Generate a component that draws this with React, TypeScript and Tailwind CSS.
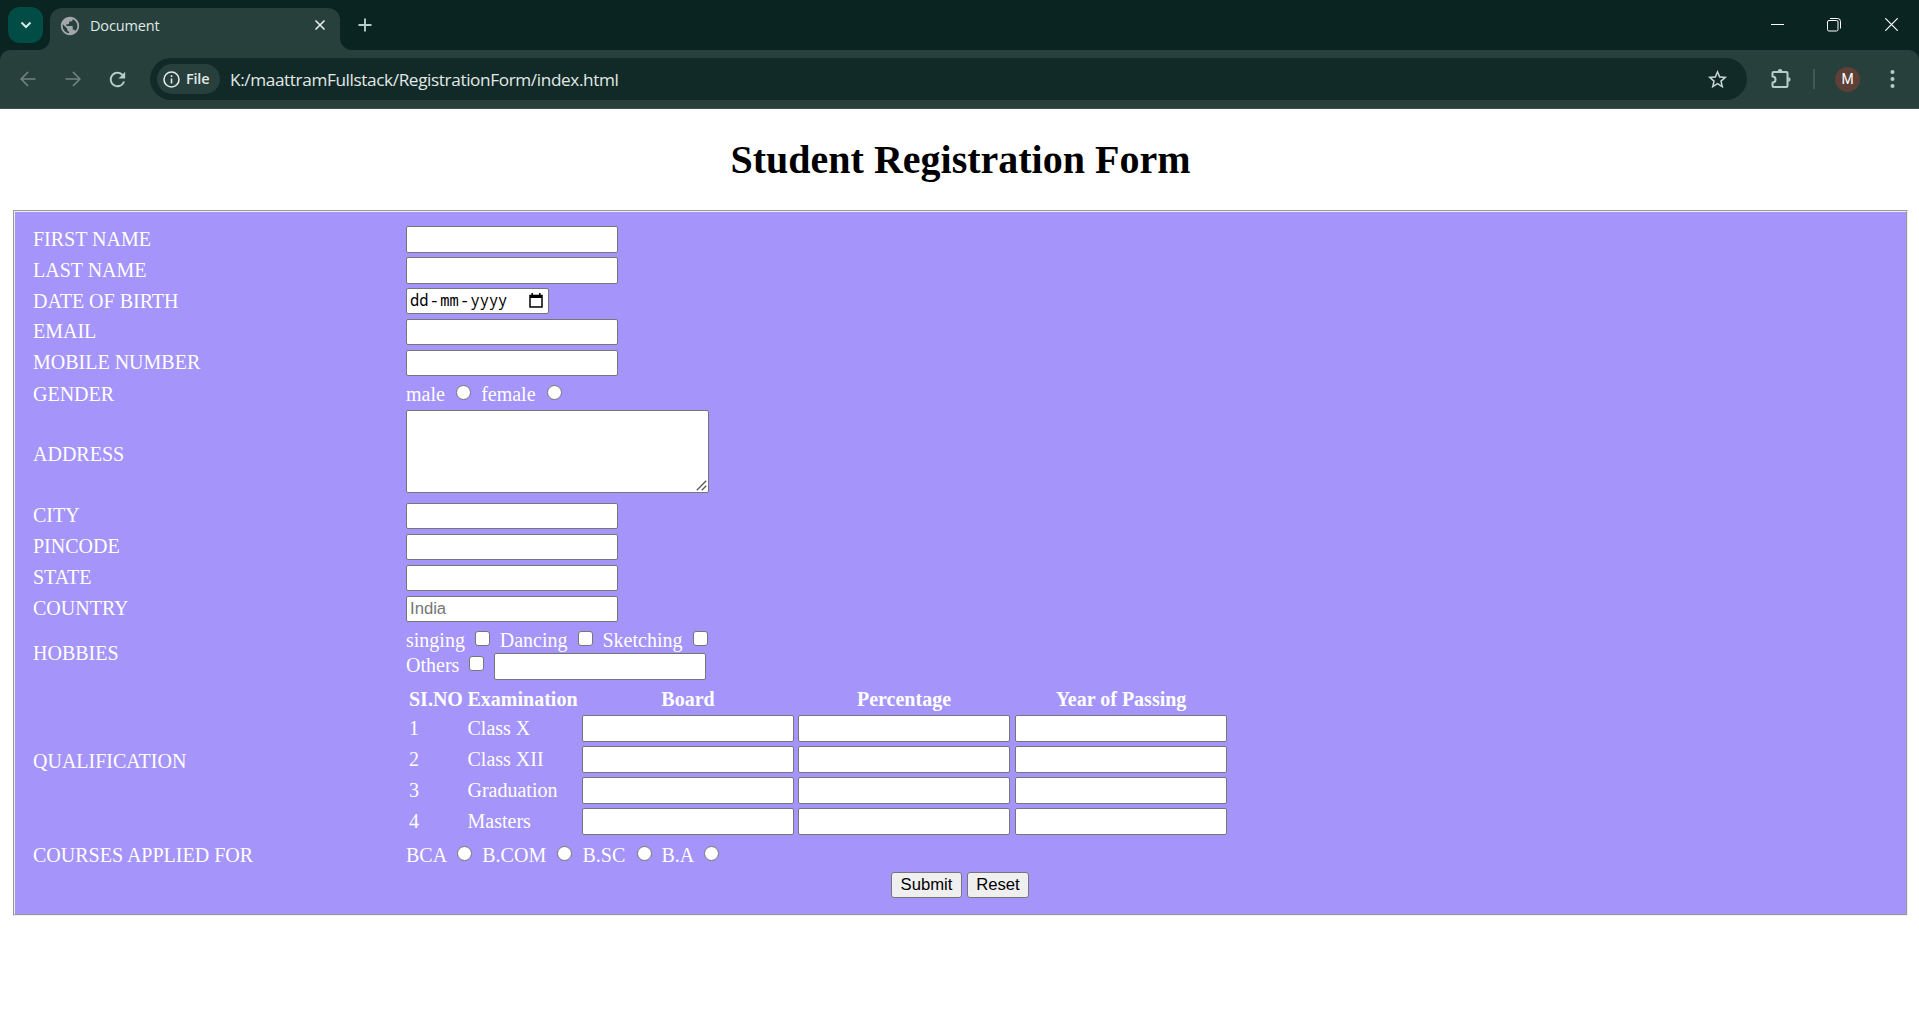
import React from "react";
import { MdPublic, MdRefresh, MdStarBorder } from "react-icons/md";

const inputBox = "box-border rounded-[2px] border border-[#767676] bg-white outline-none";

function Field({ placeholder, tall }: { placeholder?: string; tall?: boolean }) {
  return (
    <input
      type="text"
      placeholder={placeholder}
      className={`${inputBox} block w-[212px] shrink-0 px-[3px] font-['Liberation_Sans',Arial,sans-serif] text-[16.67px] text-black placeholder:text-[#757575] ${tall ? "h-[27px]" : "h-[26px]"}`}
    />
  );
}

function Row({ label, height, children, labelShift = "" }: { label: string; height: string; children: React.ReactNode; labelShift?: string }) {
  return (
    <div className={`flex ${height}`}>
      <div className={`flex w-[373px] shrink-0 items-center leading-[23px] ${labelShift}`}>{label}</div>
      <div>{children}</div>
    </div>
  );
}

function Radio({ name }: { name: string }) {
  return (
    <input
      type="radio"
      name={name}
      className="mr-[5px] ml-[6.25px] inline-block size-[15px] appearance-none rounded-full border border-[#767676] bg-white align-[1px]"
    />
  );
}

function Check() {
  return (
    <input
      type="checkbox"
      className="mr-[4.75px] ml-[5.15px] inline-block size-[15px] appearance-none rounded-[3px] border border-[#767676] bg-white align-[1px]"
    />
  );
}

function TabStrip() {
  return (
    <div className="flex h-[50px] bg-[#0a2421] text-[#dfe9e7]">
      <button className="mt-[7px] ml-[8px] flex h-[36px] w-[35px] items-center justify-center rounded-[12px] bg-[#014d46]">
        <svg width="12" height="8" viewBox="0 0 12 8" fill="none" stroke="#d5ebe7" strokeWidth="2"><path d="M1.500 1.500 6 6l4.500-4.500" /></svg>
      </button>
      <svg className="ml-[-5px] self-end" width="12" height="12" viewBox="0 0 12 12"><path d="M12 0v12H0A12 12 0 0 0 12 0Z" fill="#28403c" /></svg>
      <div className="mt-[8px] flex h-[42px] w-[290px] items-center rounded-t-[12px] bg-[#28403c]">
        <MdPublic className="mb-[7px] ml-[9px] size-[22px] text-[#a2a7ac]" />
        <span className="mb-[7px] ml-[9px] font-['Open_Sans','Noto_Sans',sans-serif] text-[14.500px] tracking-[-0.15px]">Document</span>
        <svg className="mr-[14px] mb-[8px] ml-auto" width="12" height="12" viewBox="0 0 12 12" stroke="#dfe9e7" strokeWidth="1.700"><path d="m1.500 1.500 9 9m0-9-9 9" /></svg>
      </div>
      <svg className="self-end" width="12" height="12" viewBox="0 0 12 12"><path d="M0 0v12h12A12 12 0 0 1 0 0Z" fill="#28403c" /></svg>
      <svg className="mt-[18px] ml-[6px]" width="14" height="14" viewBox="0 0 14 14" stroke="#b4cfca" strokeWidth="1.900"><path d="M7 .5v13M.5 7h13" /></svg>
      <div className="mr-[21px] ml-auto flex items-start pt-[18px]">
        <svg className="mr-[43px]" width="13" height="13" viewBox="0 0 13 13" stroke="#fff"><path d="M0 6.500h13" /></svg>
        <svg className="mr-[44px]" width="14" height="14" viewBox="0 0 14 14" fill="none" stroke="#fff"><rect x=".5" y="2.500" width="10.500" height="10.500" rx="1.500" /><path d="M3 .5h7.500a3 3 0 0 1 3 3V10.500" /></svg>
        <svg width="13" height="13" viewBox="0 0 13 13" stroke="#fff" strokeWidth="1.200"><path d="m.3.3 12.400 12.400m0-12.400L.3 12.700" /></svg>
      </div>
    </div>
  );
}

function Toolbar() {
  return (
    <div className="bg-[#0a2421]">
      <div className="flex h-[59px] items-center rounded-t-[10px] border-b border-[#3c514e] bg-[#28403c]">
        <svg className="ml-[20px]" width="16" height="16" viewBox="0 0 16 16" fill="none" stroke="#6f8480" strokeWidth="1.700"><path d="M15.500 8H1.500M8 1 1.200 8 8 15" /></svg>
        <svg className="ml-[29px]" width="16" height="16" viewBox="0 0 16 16" fill="none" stroke="#6f8480" strokeWidth="1.700"><path d="M.5 8h14M8 1l6.800 7L8 15" /></svg>
        <MdRefresh className="ml-[25px] size-[23px] text-[#b4cfca]" />
        <div className="ml-[21px] flex h-[42px] w-[1597px] items-center rounded-full bg-[#122a27]">
          <div className="ml-[7px] flex h-[30px] w-[63px] items-center rounded-full bg-[#28403c]">
            <svg className="ml-[6px]" width="17" height="17" viewBox="0 0 17 17" fill="none" stroke="#e1e9e7" strokeWidth="1.600"><circle cx="8.500" cy="8.500" r="7.500" /><path d="M8.500 7.500V12.500M8.500 4.300v1.700" /></svg>
            <span className="ml-[6px] font-['Open_Sans','Noto_Sans',sans-serif] text-[14.500px] font-semibold tracking-[-0.2px] text-[#e1e9e7]">File</span>
          </div>
          <span className="ml-[10px] pt-px font-['Open_Sans','Noto_Sans',sans-serif] text-[17.200px] tracking-[-0.38px] text-[#e1e9e7]">K:/maattramFullstack/RegistrationForm/index.html</span>
          <MdStarBorder className="mr-[18px] ml-auto size-[23px] text-[#c9d3d1]" />
        </div>
        <svg className="ml-[23px]" width="22" height="22" viewBox="0 0 22 22"><path d="M3.500 4h13a1 1 0 0 1 1 1v13a1 1 0 0 1-1 1h-13a1 1 0 0 1-1-1v-3.500a3 3 0 0 0 0-6V5a1 1 0 0 1 1-1Z" fill="none" stroke="#b4cfca" strokeWidth="2" strokeLinejoin="round" /><path d="M7.800 3.300a2.300 2.300 0 0 1 4.600 0ZM18.300 9.200a2.300 2.300 0 0 1 0 4.600Z" fill="#b4cfca" /></svg>
        <div className="ml-[21px] h-[20px] w-[2px] bg-[#3f5a55]" />
        <div className="ml-[20px] flex size-[25px] items-center justify-center rounded-full bg-[#5d4037] font-['Roboto',sans-serif] text-[14px] text-white">M</div>
        <svg className="ml-[30px]" width="5" height="18" viewBox="0 0 5 18" fill="#b4cfca"><circle cx="2.500" cy="2" r="2" /><circle cx="2.500" cy="9" r="2" /><circle cx="2.500" cy="16" r="2" /></svg>
      </div>
    </div>
  );
}

const exams = ["Class X", "Class XII", "Graduation", "Masters"];

export default function App() {
  return (
    <div className="h-[1019px] overflow-hidden bg-white">
      <TabStrip />
      <Toolbar />
      <main className="font-['Liberation_Serif','Times_New_Roman',serif] text-[20px] leading-[23px]">
        <h1 className="flex h-[101px] items-center justify-center pt-px pl-[2px] text-[40px] leading-[46px] font-bold text-black">Student Registration Form</h1>
        <form className="ml-[13px] h-[706px] w-[1895px] border-2 border-[#eee] bg-[#a594fa] pt-[14px] pl-[18px] text-white [border-style:groove]">
          <Row label="FIRST NAME" height="h-[31px]" labelShift="pb-[4px]"><Field tall /></Row>
          <Row label="LAST NAME" height="h-[31px]" labelShift="pb-[4px]"><Field tall /></Row>
          <Row label="DATE OF BIRTH" height="h-[31px]" labelShift="pb-[4px]">
            <div className={`${inputBox} flex h-[26px] w-[143px] items-center pr-[5px] pl-[3px] font-['Noto_Sans_Mono','DejaVu_Sans_Mono',monospace] text-black`}>
              <span className="flex gap-[1.250px] text-[15.400px] leading-[20px] whitespace-nowrap">
                <span>dd</span><span>-</span><span>mm</span><span>-</span><span>yyyy</span>
              </span>
              <svg className="mb-px ml-auto" width="14" height="15" viewBox="0 0 14 15"><path d="M1 2.500h12v11.500H1Z" fill="none" stroke="#000" strokeWidth="1.500" /><path d="M1 2h12v3H1ZM2.500 0h1.500v2H2.500ZM10 0h1.500v2H10Z" /></svg>
            </div>
          </Row>
          <Row label="EMAIL" height="h-[31px]" labelShift="pb-[6px]"><Field /></Row>
          <Row label="MOBILE NUMBER" height="h-[31px]" labelShift="pb-[6px]"><Field /></Row>
          <Row label="GENDER" height="h-[29px]" labelShift="pb-[3px]">
            <div className="pt-[2px] whitespace-nowrap">male <Radio name="gender" /> female <Radio name="gender" /></div>
          </Row>
          <Row label="ADDRESS" height="h-[93px]" labelShift="pb-[4px]">
            <div className="relative">
              <textarea className={`${inputBox} block h-[83px] w-[303px] resize-none`} />
              <svg className="absolute right-[2px] bottom-[2px]" width="11" height="11" viewBox="0 0 11 11" stroke="#555" strokeWidth="1.300"><path d="M.8 10.200 10.200.8M5.800 10.200l4.400-4.400" /></svg>
            </div>
          </Row>
          <Row label="CITY" height="h-[31px]" labelShift="pb-[6px]"><Field /></Row>
          <Row label="PINCODE" height="h-[31px]" labelShift="pb-[6px]"><Field /></Row>
          <Row label="STATE" height="h-[31px]" labelShift="pb-[6px]"><Field /></Row>
          <Row label="COUNTRY" height="h-[31px]" labelShift="pb-[6px]"><Field placeholder="India" /></Row>
          <Row label="HOBBIES" height="h-[57px]" labelShift="pb-[4px]">
            <div className="h-[26px] pt-[2px] whitespace-nowrap">singing <Check /> Dancing <Check /> Sketching <Check /></div>
            <div className="flex h-[27px] whitespace-nowrap"><span className="w-[88px] pt-px">Others <Check /></span><Field tall /></div>
          </Row>
          <Row label="QUALIFICATION" height="h-[157px]" labelShift="pb-[2px]">
            <div className="grid grid-cols-[58.500px_114.500px_216px_217px_212px] pl-[3px]">
              <div className="col-span-5 grid h-[31px] grid-cols-subgrid pt-[4px] font-bold">
                <div>SI.NO</div>
                <div>Examination</div>
                <div className="w-[212px] text-center">Board</div>
                <div className="w-[212px] text-center">Percentage</div>
                <div className="w-[212px] text-center">Year of Passing</div>
              </div>
              {exams.map((exam, i) => (
                <div key={exam} className="col-span-5 grid h-[31px] grid-cols-subgrid">
                  <div className="pt-[2px]">{i + 1}</div>
                  <div className="pt-[2px]">{exam}</div>
                  <Field tall />
                  <Field tall />
                  <Field tall />
                </div>
              ))}
            </div>
          </Row>
          <Row label="COURSES APPLIED FOR" height="h-[31px]" labelShift="pb-[3px]">
            <div className="pt-[3px] whitespace-nowrap">BCA <Radio name="course" /> B.COM <Radio name="course" /> B.SC <Radio name="course" /> B.A <Radio name="course" /></div>
          </Row>
          <div className="ml-[858px] flex gap-[5px] font-['Liberation_Sans',Arial,sans-serif] text-[16.670px] leading-[20px] text-black">
            <button type="submit" className="h-[26px] w-[71px] rounded-[3px] border border-[#767676] bg-[#efefef]">Submit</button>
            <button type="reset" className="h-[26px] w-[62px] rounded-[3px] border border-[#767676] bg-[#efefef]">Reset</button>
          </div>
        </form>
      </main>
    </div>
  );
}
